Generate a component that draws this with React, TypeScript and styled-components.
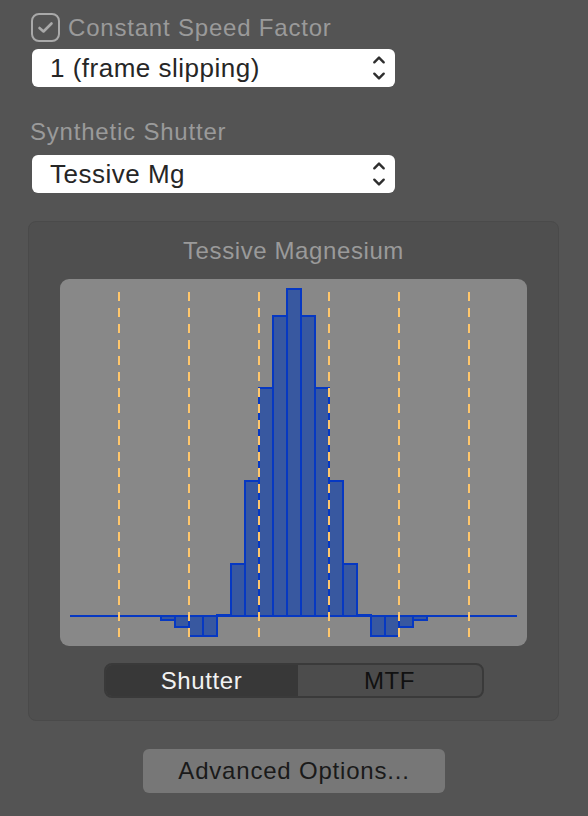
import React from "react";
import styled, { createGlobalStyle } from "styled-components";

const GlobalStyle = createGlobalStyle`
  html, body {
    margin: 0;
    padding: 0;
    background: #545454;
  }
  body {
    font-family: "Liberation Sans", Arial, Helvetica, sans-serif;
    -webkit-font-smoothing: antialiased;
  }
`;

const Panel = styled.div`
  width: 588px;
  min-height: 816px;
  box-sizing: border-box;
  padding-top: 13px;
  display: flex;
  flex-direction: column;
  background: #545454;
`;

const CheckRow = styled.label`
  display: flex;
  align-items: center;
  gap: 8px;
  height: 29px;
  margin-left: 31px;
`;

const CheckBox = styled.span`
  width: 29px;
  height: 29px;
  box-sizing: border-box;
  border: 2px solid #a9a9a9;
  border-radius: 8px;
  display: flex;
  align-items: center;
  justify-content: center;
`;

const Label = styled.div<{ $indent?: number; $top?: number }>`
  font-size: 24px;
  line-height: 30px;
  height: 30px;
  color: #9a9a9a;
  letter-spacing: 0.8px;
  margin-left: ${(p) => p.$indent ?? 0}px;
  margin-top: ${(p) => p.$top ?? 0}px;
  white-space: nowrap;
`;

const Select = styled.div<{ $top: number }>`
  width: 363px;
  height: 38px;
  margin-left: 32px;
  margin-top: ${(p) => p.$top}px;
  box-sizing: border-box;
  background: #ffffff;
  border-radius: 6px;
  display: flex;
  align-items: center;
  justify-content: space-between;
  padding: 0 9px 0 18px;
  font-size: 26px;
  letter-spacing: 0.5px;
  color: #262626;
  white-space: nowrap;
`;

const GroupBox = styled.div`
  width: 531px;
  margin: 28px 0 0 28px;
  box-sizing: border-box;
  border: 1px solid #4a4a4a;
  border-radius: 8px;
  background: #4f4f4f;
  padding: 14px 0 22px;
  display: flex;
  flex-direction: column;
  align-items: center;
`;

const Title = styled.div`
  font-size: 24px;
  line-height: 30px;
  height: 30px;
  color: #9a9a9a;
  letter-spacing: 0.6px;
`;

const Chart = styled.div`
  width: 467px;
  height: 367px;
  margin-top: 13px;
  background: #888888;
  border-radius: 9px;
  overflow: hidden;
`;

const Segmented = styled.div`
  width: 380px;
  height: 35px;
  margin-top: 17px;
  box-sizing: border-box;
  border: 2px solid #3a3a3a;
  border-radius: 8px;
  background: #4c4c4c;
  display: flex;
  overflow: hidden;
`;

const Segment = styled.div<{ $active?: boolean; $w: number }>`
  width: ${(p) => p.$w}px;
  display: flex;
  align-items: center;
  justify-content: center;
  font-size: 24px;
  letter-spacing: 0.6px;
  background: ${(p) => (p.$active ? "#383838" : "transparent")};
  color: ${(p) => (p.$active ? "#f2f2f2" : "#111111")};
`;

const ButtonRow = styled.div`
  display: flex;
  justify-content: center;
  margin-top: 28px;
`;

const Button = styled.button`
  width: 302px;
  height: 44px;
  border: none;
  border-radius: 6px;
  background: #777777;
  color: #1a1a1a;
  font-family: "Liberation Sans", Arial, Helvetica, sans-serif;
  font-size: 24px;
  letter-spacing: 0.8px;
  padding: 0;
  display: flex;
  align-items: center;
  justify-content: center;
`;

const Chevrons = () => (
  <svg width="14" height="26" viewBox="0 0 14 26" fill="none">
    <path d="M2.3 7.3 L7 2.6 L11.7 7.3" stroke="#2e2e2e" strokeWidth="2.4" strokeLinecap="round" strokeLinejoin="round" />
    <path d="M2.3 18.7 L7 23.4 L11.7 18.7" stroke="#2e2e2e" strokeWidth="2.4" strokeLinecap="round" strokeLinejoin="round" />
  </svg>
);

const CheckMark = () => (
  <svg width="17" height="13" viewBox="0 0 17 13" fill="none">
    <path d="M2.5 7 L6.5 10.5 L14.5 2.5" stroke="#a9a9a9" strokeWidth="2.6" strokeLinecap="round" strokeLinejoin="round" />
  </svg>
);

const BASE = 337;
const BAR_X0 = 101;
const BAR_W = 14;
const HEIGHTS = [-4, -11, -20, -20, 1, 52, 135, 228, 300, 327, 300, 228, 135, 52, 1, -20, -20, -11, -4];
const DASH_X = [59, 129, 199, 269, 339, 409];

const ShutterChart = () => (
  <svg width="467" height="367" viewBox="0 0 467 367">
    <line x1="10" y1={BASE} x2="457" y2={BASE} stroke="#0638c2" strokeWidth="2" />
    {HEIGHTS.map((h, i) => {
      const x = BAR_X0 + i * BAR_W;
      const y = h >= 0 ? BASE - h : BASE;
      const height = Math.abs(h);
      return (
        <rect
          key={i}
          x={x}
          y={y}
          width={BAR_W}
          height={height}
          fill="#3858a0"
          stroke="#0638c2"
          strokeWidth="2"
        />
      );
    })}
    {DASH_X.map((x) => (
      <line
        key={x}
        x1={x}
        y1="13"
        x2={x}
        y2="358"
        stroke="#ffc66b"
        strokeWidth="2"
        strokeDasharray="9 7"
      />
    ))}
  </svg>
);

export default function App() {
  return (
    <>
      <GlobalStyle />
      <Panel>
        <CheckRow>
          <CheckBox>
            <CheckMark />
          </CheckBox>
          <Label>Constant Speed Factor</Label>
        </CheckRow>
        <Select $top={7}>
          <span>1 (frame slipping)</span>
          <Chevrons />
        </Select>
        <Label $indent={30} $top={30}>Synthetic Shutter</Label>
        <Select $top={8}>
          <span>Tessive Mg</span>
          <Chevrons />
        </Select>
        <GroupBox>
          <Title>Tessive Magnesium</Title>
          <Chart>
            <ShutterChart />
          </Chart>
          <Segmented>
            <Segment $active $w={192}>Shutter</Segment>
            <Segment $w={184}>MTF</Segment>
          </Segmented>
        </GroupBox>
        <ButtonRow>
          <Button>Advanced Options...</Button>
        </ButtonRow>
      </Panel>
    </>
  );
}
